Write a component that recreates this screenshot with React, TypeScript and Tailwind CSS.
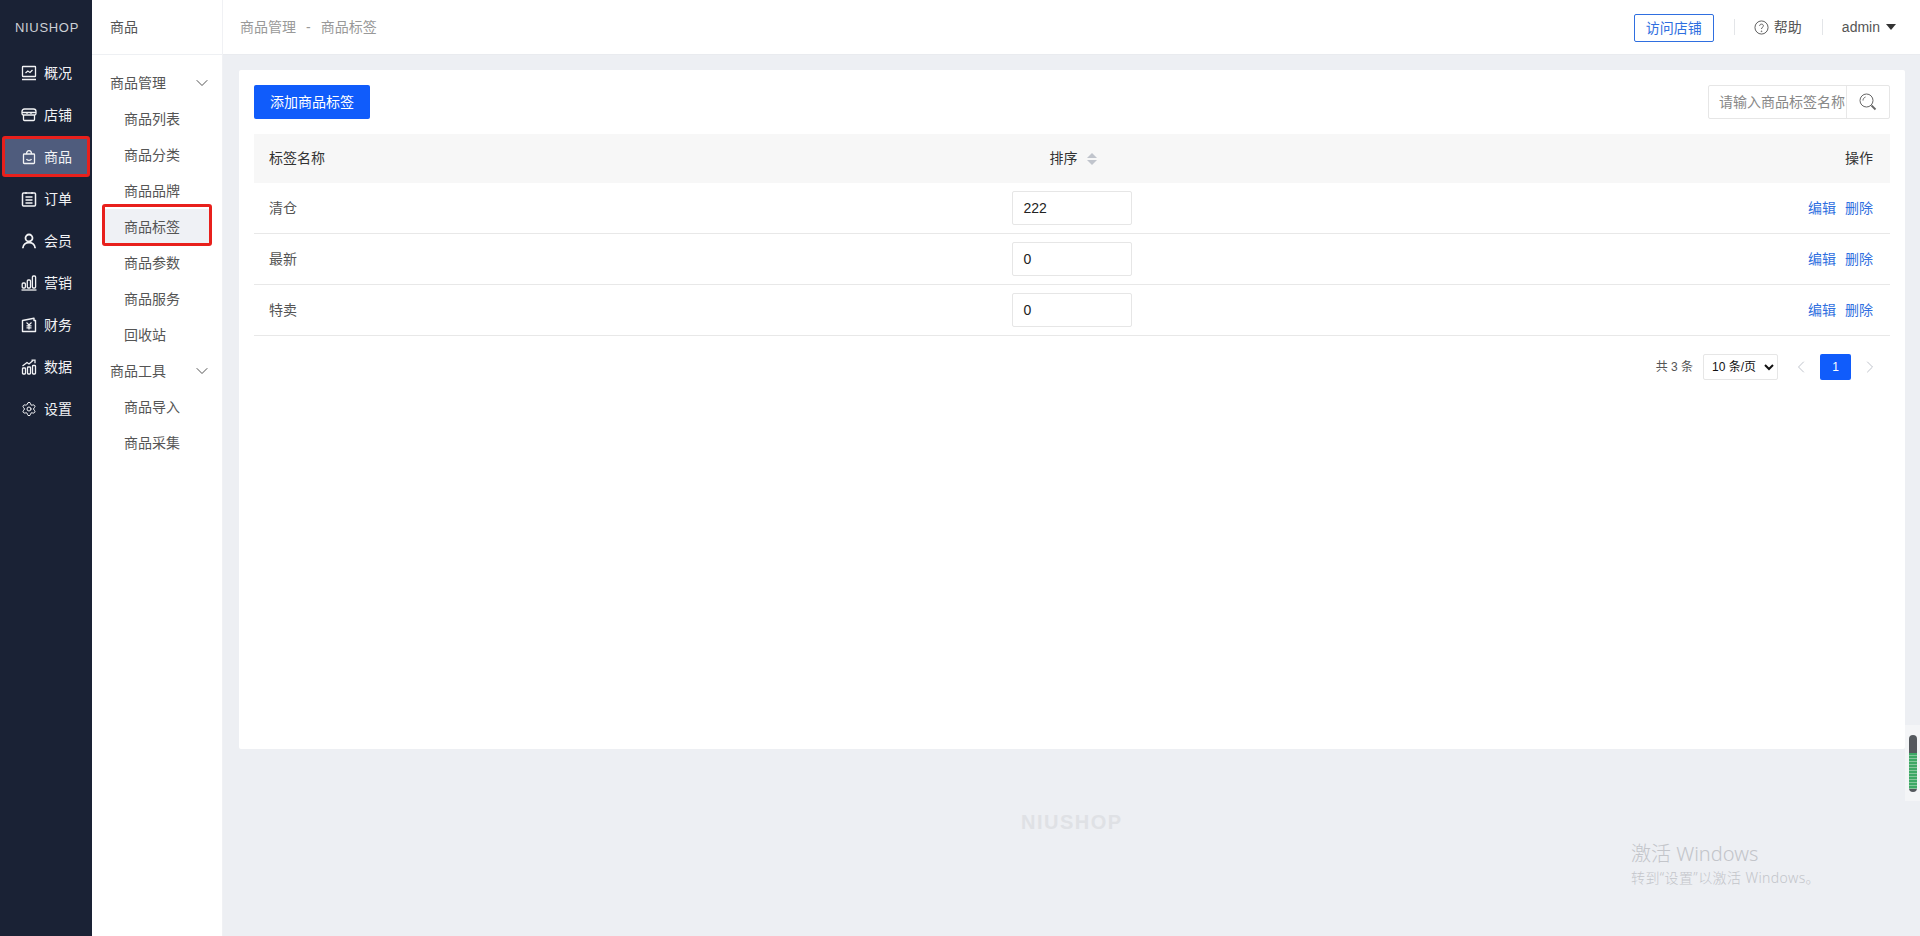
import { ChevronDown, ChevronLeft, ChevronRight, Settings } from 'lucide-react';
import type { ReactNode } from 'react';

const fontStack = "font-['Liberation_Sans','Noto_Sans_CJK_SC',sans-serif]";

const Icon = ({ children }: { children: ReactNode }) => (
  <svg viewBox="0 0 16 16" fill="none" stroke="currentColor" strokeWidth="1.3" className="w-4 h-4 shrink-0">
    {children}
  </svg>
);

// red annotation frame drawn over a nav item
const RedFrame = ({ className }: { className: string }) => (
  <span className={`pointer-events-none absolute rounded-[3px] border-[3px] border-[#e8201c] ${className}`} />
);

const mainNav: { label: string; active?: boolean; icon: ReactNode }[] = [
  {
    label: '概况',
    icon: (
      <Icon>
        <rect x="1.500" y="1.500" width="13" height="10" rx="0.6" />
        <path d="M1 14.500h14M4.500 8l2.300-2 2.200 1.500 2.500-2.500" />
      </Icon>
    ),
  },
  {
    label: '店铺',
    icon: (
      <Icon>
        <path d="M3.500 2h9c1.500 0 2.500 1 2.500 2.500V6.500c0 .8-.6 1.500-1.500 1.500h-11C1.600 8 1 7.300 1 6.500V4.500C1 3 2 2 3.500 2z" />
        <path d="M2.500 8v4.500c0 .6.400 1 1 1h9c.6 0 1-.4 1-1V8M1 5.500h14M6 5.500v1.500M10 5.500v1.500" />
      </Icon>
    ),
  },
  {
    label: '商品',
    active: true,
    icon: (
      <Icon>
        <rect x="2.500" y="5" width="11" height="9.500" rx="0.800" />
        <path d="M5.500 5c0-4.500 5-4.500 5 0M5.500 10c.8 1.800 4.200 1.800 5 0" />
      </Icon>
    ),
  },
  {
    label: '订单',
    icon: (
      <Icon>
        <rect x="1.500" y="2" width="13" height="13" rx="1" strokeWidth="1.500" />
        <path d="M5 1v2M11 1v2M4.500 6h7M4.500 9h7M4.500 12h7" strokeWidth="1.400" />
      </Icon>
    ),
  },
  {
    label: '会员',
    icon: (
      <Icon>
        <circle cx="8" cy="5" r="3.500" strokeWidth="1.800" />
        <path d="M1.800 15.200c.5-7.600 11.900-7.600 12.400 0" strokeWidth="1.800" />
      </Icon>
    ),
  },
  {
    label: '营销',
    icon: (
      <Icon>
        <rect x="1.200" y="8" width="3.200" height="5" rx="1" />
        <rect x="6.300" y="5" width="3.200" height="8" rx="1" />
        <rect x="11.400" y="1" width="3.200" height="12" rx="1" />
        <path d="M.5 15h15" />
      </Icon>
    ),
  },
  {
    label: '财务',
    icon: (
      <Icon>
        <path d="M1.500 3.500 13 1.200v2.300h1.500v11h-13z" strokeWidth="1.400" strokeLinejoin="round" />
        <path d="M5.500 5.500 8 8l2.500-2.500M8 8v4.500M5.500 8.800h5M5.500 10.800h5" strokeWidth="1.200" />
      </Icon>
    ),
  },
  {
    label: '数据',
    icon: (
      <Icon>
        <rect x="1.500" y="9" width="3" height="6" rx="0.800" />
        <rect x="6.500" y="8" width="3" height="7" rx="0.800" />
        <rect x="11.500" y="6.500" width="3" height="8.500" rx="0.800" />
        <path d="M1.500 7 6 3.500l2 1.500 4-3.500M10.500 1.200h3.500v3" />
      </Icon>
    ),
  },
  {
    label: '设置',
    icon: <Settings size={16} strokeWidth={1.500} className="shrink-0" />,
  },
];

const subGroups = [
  { title: '商品管理', items: ['商品列表', '商品分类', '商品品牌', '商品标签', '商品参数', '商品服务', '回收站'] },
  { title: '商品工具', items: ['商品导入', '商品采集'] },
];

const rows = [
  { name: '清仓', sort: '222' },
  { name: '最新', sort: '0' },
  { name: '特卖', sort: '0' },
];

export default function App() {
  return (
    <div className={`${fontStack} relative flex h-[936px] w-[1920px] overflow-hidden bg-[#edeff3] text-[14px] text-[#333]`}>
      {/* first level nav */}
      <aside className="flex w-[92px] shrink-0 flex-col bg-[#1a2235] text-white">
        <div className="flex h-[56px] items-center justify-center pl-[2px] text-[13px] tracking-[0.7px] text-[#cdd0d6]">NIUSHOP</div>
        <nav className="mt-[-4px] flex flex-col">
          {mainNav.map((item) => (
            <div key={item.label} className="flex h-[42px] items-center justify-center">
              <div
                className={`relative flex h-[36px] w-[82px] items-center justify-center gap-[7px] pl-[1px] text-[#f2f3f5] ${
                  item.active ? 'bg-[#4f5c7d]' : ''
                }`}
              >
                {item.icon}
                <span>{item.label}</span>
                {item.active && <RedFrame className="-top-[3px] -bottom-[2px] -left-[3px] -right-[3px]" />}
              </div>
            </div>
          ))}
        </nav>
      </aside>

      {/* second level nav */}
      <aside className="flex w-[131px] shrink-0 flex-col border-r border-[#f0f1f4] bg-white">
        <div className="flex h-[55px] items-center border-b border-[#eef0f3] pl-[18px] text-[#555]">商品</div>
        <div className="flex flex-col pt-[10px] text-[#555]">
          {subGroups.map((group) => (
            <div key={group.title} className="flex flex-col">
              <div className="flex h-[36px] items-center justify-between pl-[18px] pr-[10px]">
                <span>{group.title}</span>
                <ChevronDown size={20} strokeWidth={1.100} className="text-[#444]" />
              </div>
              {group.items.map((label) => (
                <div
                  key={label}
                  className={`relative ml-[13px] mr-[13px] flex h-[36px] items-center pl-[19px] ${
                    label === '商品标签' ? 'bg-[#eff1f5]' : ''
                  }`}
                >
                  {label}
                  {label === '商品标签' && <RedFrame className="-top-[5px] -bottom-[1px] -left-[3px] -right-[3px]" />}
                </div>
              ))}
            </div>
          ))}
        </div>
      </aside>

      <div className="flex min-w-0 flex-1 flex-col">
        {/* header */}
        <header className="flex h-[55px] shrink-0 items-center justify-between border-b border-[#e9ebef] bg-white pl-[17px] pr-[24px]">
          <div className="flex items-center gap-[9px] text-[#999]">
            <span>商品管理</span>
            <span className="px-[1px]">-</span>
            <span>商品标签</span>
          </div>
          <div className="flex items-center">
            <button className="mt-[1px] h-[28px] w-[80px] rounded-[2px] border border-[#2f6fe0] pt-[1px] text-[#2f6fe0]">访问店铺</button>
            <span className="ml-[20px] h-[16px] w-px bg-[#e3e5e8]" />
            <div className="ml-[19px] flex items-center gap-[5px] text-[#555]">
              <svg viewBox="0 0 16 16" className="h-[15px] w-[15px]" fill="none" stroke="currentColor">
                <circle cx="8" cy="8" r="7" />
                <path d="M6 6.200C6 3.800 10 3.800 10 6.200 10 7.800 8 7.800 8 9.600" />
                <circle cx="8" cy="12" r="0.400" />
              </svg>
              <span>帮助</span>
            </div>
            <span className="ml-[20px] h-[16px] w-px bg-[#e3e5e8]" />
            <span className="ml-[19px] text-[#555]">admin</span>
            <span className="ml-[6px] h-0 w-0 border-x-[5.500px] border-t-[6px] border-x-transparent border-t-[#333]" />
          </div>
        </header>

        {/* content */}
        <main className="flex flex-1 flex-col pl-[16px] pr-[15px] pt-[15px]">
          <section className="flex h-[679px] flex-col rounded-[2px] bg-white p-[15px]">
            <div className="flex items-center justify-between">
              <button className="h-[34px] w-[116px] rounded-[2px] bg-[#105cfb] text-white">添加商品标签</button>
              <div className="flex h-[34px] w-[182px] rounded-[2px] border border-[#e6e6e6]">
                <input
                  placeholder="请输入商品标签名称"
                  className="min-w-0 flex-1 border-r border-[#e8e8e8] pl-[10px] outline-none placeholder:text-[#888]"
                />
                <div className="flex w-[42px] items-center justify-center text-[#666]">
                  <svg viewBox="0 0 18 18" className="h-[18px] w-[18px]" fill="none" stroke="currentColor" strokeWidth="1">
                    <circle cx="7.500" cy="7.500" r="6.500" />
                    <path d="M12.500 12.500 16.500 16.500" strokeWidth="1.800" />
                    <path d="M4 7.500c0-1.500 1-3 2.500-3.500" />
                  </svg>
                </div>
              </div>
            </div>

            <div className="mt-[15px]">
              <div className="grid h-[49px] grid-cols-3 items-center bg-[#f7f7f7] pl-[15px] pr-[17px]">
                <span>标签名称</span>
                <div className="flex items-center justify-center gap-[10px] pl-[5px]">
                  <span>排序</span>
                  <span className="flex flex-col gap-[2px]">
                    <span className="h-0 w-0 border-x-[5px] border-b-[5px] border-x-transparent border-b-[#c0c4cc]" />
                    <span className="h-0 w-0 border-x-[5px] border-t-[5px] border-x-transparent border-t-[#c0c4cc]" />
                  </span>
                </div>
                <span className="text-right">操作</span>
              </div>
              {rows.map((row) => (
                <div key={row.name} className="grid h-[51px] grid-cols-3 items-center border-b border-[#e8e8e8] pl-[15px] pr-[17px]">
                  <span className="text-[#555]">{row.name}</span>
                  <div className="flex justify-center">
                    <input
                      readOnly
                      value={row.sort}
                      className="ml-[3px] h-[34px] w-[120px] rounded-[2px] border border-[#e6e6e6] pl-[10px] text-[#222] outline-none"
                    />
                  </div>
                  <div className="flex justify-end gap-[9px] text-[#2f6fe0]">
                    <span>编辑</span>
                    <span>删除</span>
                  </div>
                </div>
              ))}
            </div>

            <div className="mt-[18px] flex h-[26px] items-center justify-end text-[12px]">
              <span className="text-[#555]">共 3 条</span>
              <select className="ml-[10px] h-[26px] w-[75px] rounded-[2px] border border-[#e6e6e6] bg-white pl-[4px] text-[12px] text-[#111] outline-none">
                <option>10 条/页</option>
              </select>
              <ChevronLeft size={20} strokeWidth={1.200} className="ml-[13px] text-[#c0c4cc]" />
              <span className="ml-[9px] flex h-[26px] w-[31px] items-center justify-center rounded-[2px] bg-[#105cfb] text-white">1</span>
              <ChevronRight size={20} strokeWidth={1.200} className="ml-[9px] mr-[10px] text-[#c0c4cc]" />
            </div>
          </section>

          <div className="mt-[62px] pl-[782px] text-[20px] font-bold leading-[22px] tracking-[1.500px] text-[#dfe1e5]">NIUSHOP</div>
        </main>
      </div>

      {/* windows watermark */}
      <div className="pointer-events-none absolute left-[1631px] top-[840px] font-['Noto_Sans','Noto_Sans_CJK_SC',sans-serif] font-light text-[#c3c5ca]">
        <div className="text-[20px] leading-[27px]">激活 Windows</div>
        <div className="mt-[1px] text-[14px] leading-[20px] tracking-[0.400px]">转到“设置”以激活 Windows。</div>
      </div>

      {/* scrollbar widget */}
      <div className="absolute left-[1905px] top-[725px] flex h-[76px] w-[15px] justify-center bg-[#f4f5f7] pt-[10px]">
        <div className="flex h-[57px] w-[8px] flex-col overflow-hidden rounded-full bg-[#55595e]">
          <div className="mt-[18px] mb-[3px] flex-1 bg-[repeating-linear-gradient(to_bottom,#3ea866_0px,#3ea866_2px,#86c79c_2px,#86c79c_3px)]" />
        </div>
      </div>
    </div>
  );
}
